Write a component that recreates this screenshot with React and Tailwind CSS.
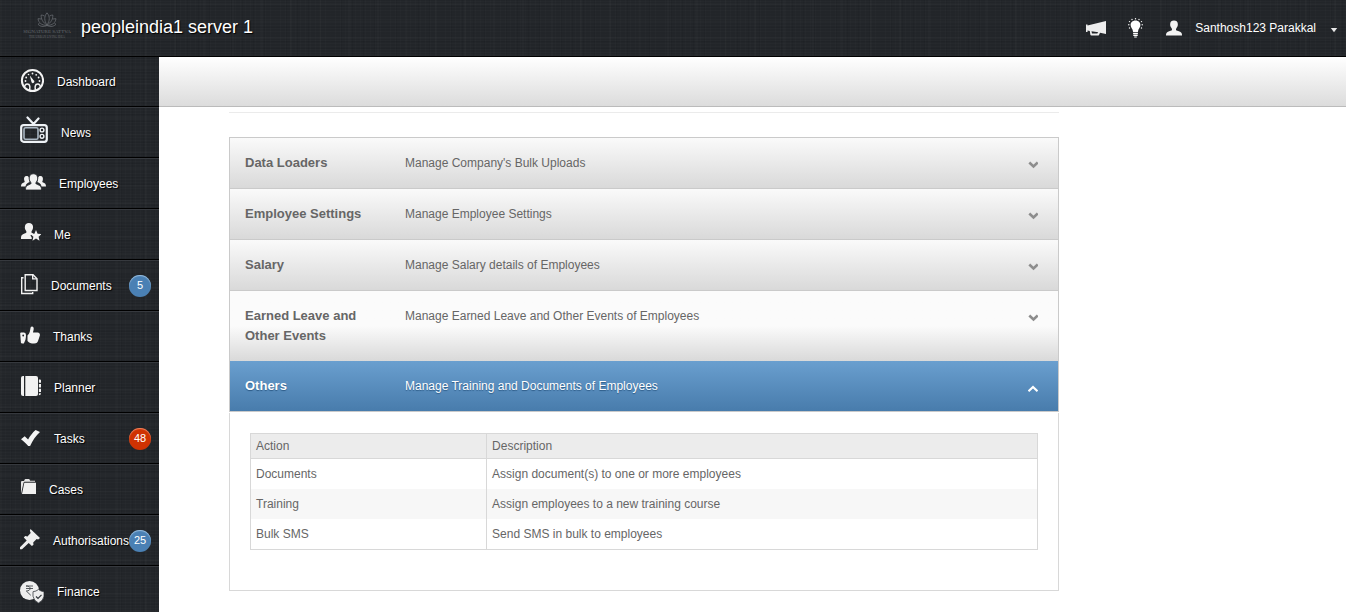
import React, { useState } from 'react';

const DashboardIcon = () => (
  <svg width="24" height="33" viewBox="0 0 24 33" fill="none">
    <circle cx="12.5" cy="15.5" r="10.600" stroke="#f4f4f4" strokeWidth="2" />
    <path d="M4.500 22c.5-3 2.500-3.500 4.500-2.500 1 1.200 1.200 3 .5 5.500M20.500 22c-.5-3-2.500-3.500-4.500-2.500-1 1.200-1.200 3-.5 5.500" stroke="#f4f4f4" strokeWidth="1.400" />
    <path d="M9.800 10.500l3.800 4.800a1.500 1.500 0 1 1-2.200 1.500z" fill="#f4f4f4" />
    <g fill="#f4f4f4">
      <circle cx="5.500" cy="16" r=".9" />
      <circle cx="6.200" cy="12.500" r=".9" />
      <circle cx="8.500" cy="9.500" r=".8" />
      <circle cx="12.500" cy="8.500" r=".9" />
      <circle cx="16.200" cy="9.800" r=".9" />
      <circle cx="18.600" cy="12.500" r=".9" />
      <circle cx="19.500" cy="16" r=".9" />
    </g>
  </svg>
);

const NewsIcon = () => (
  <svg width="28" height="33" viewBox="0 0 28 33" fill="none" stroke="#eef2f6">
    <path d="M7.500 1.500l6 6.500M18.500 2.500L13.500 8" strokeWidth="2.200" strokeLinecap="round" />
    <rect x="1.200" y="9.200" width="25.600" height="16.600" rx="2.500" strokeWidth="2.200" />
    <rect x="4" y="11.800" width="14" height="11.400" rx="1.500" stroke="#a9b6c2" strokeWidth="1.600" />
    <circle cx="22" cy="14" r="1.900" strokeWidth="1.400" />
    <circle cx="22" cy="20.300" r="1.900" strokeWidth="1.400" />
  </svg>
);

const EmployeesIcon = () => (
  <svg width="26" height="33" viewBox="0 0 26 33" fill="#f2f2f2">
    <path d="M1 19.500c0-2.600.8-3.200 3.400-4.300.5-.4.300-1-.2-2-.5-2.500.2-4.200 2.400-4.200 1.300 0 2 .6 2.200 1.500.1 2 .2 3.200.9 4.600-2.500 1.200-3.700 2-4.200 4.400z" />
    <path d="M26 19.500c0-2.600-.8-3.200-3.400-4.300-.5-.4-.3-1 .2-2 .5-2.500-.2-4.200-2.400-4.200-1.300 0-2 .6-2.200 1.500-.1 2-.2 3.200-.9 4.600 2.500 1.200 3.700 2 4.200 4.400z" />
    <path d="M5.500 23c0-3.800 1.200-4.400 5-5.900.9-.6.500-1.500-.1-2.400-1.300-1.600-1.200-3-1-4.400.2-2.200 1.500-3.500 4-3.500s3.900 1.300 4.100 3.500c.2 1.500.2 2.900-1 4.400-.6.900-1 1.800-.1 2.400 3.800 1.500 5.100 2.100 5.100 5.900z" stroke="#212429" strokeWidth=".8" />
  </svg>
);

const MeIcon = () => (
  <svg width="21" height="33" viewBox="0 0 21 33" fill="#f2f2f2">
    <path d="M1 21c0-4.300 1-4.500 4.900-6 .9-.6.600-1.500 0-2.500-1-1.500-1.200-2.700-1-4 .2-2.300 1.500-3.500 4-3.500s3.900 1.200 4.100 3.500c.1 1.400 0 2.500-1 4-.6 1-.9 1.900 0 2.500l1.500.6c-.5 1-.9 1.200-3 1.400.2 2 1.800 2 1.200 4z" />
    <path d="M16 12l1.600 3.700 4 .4-3 2.600.9 4L16 20.600l-3.500 2.100.9-4-3-2.600 4-.4z" />
  </svg>
);

const DocumentsIcon = () => (
  <svg width="18" height="33" viewBox="0 0 18 33" fill="none" stroke="#f2f2f2" strokeWidth="1.400">
    <path d="M5.200 5.700h7.800l4 4v11.800H5.200z" />
    <path d="M12.700 5.700v4.200h4.300" />
    <path d="M3.500 8.700H1.700v15.800h11v-1.500" />
  </svg>
);

const ThanksIcon = () => (
  <svg width="20" height="33" viewBox="0 0 20 33">
    <path d="M7.500 15.500c2.500-2.500 2.400-4.500 3-7.500.5-2.300 3.200-2 3.200.5 0 2-.5 2.700-.7 4h4.500c2.300 0 2.800 1.800 2.200 3.600l-1.500 4.500c-.6 2-1.500 2.900-4 2.900-3.500 0-4.900-.3-6.700-2.500z" fill="#f4f4f4" />
    <path d="M.2 13.500q0-1 1-1H4q2 .2 2 2.500c0 3-.7 6-2.200 8.500H2.200q-1.200 0-1.300-1.200z" fill="#f4f4f4" />
    <circle cx="3.200" cy="15.500" r=".9" fill="#212429" />
  </svg>
);

const PlannerIcon = () => (
  <svg width="21" height="33" viewBox="0 0 21 33" fill="#f2f2f2">
    <path d="M3 5h1v20H3q-2 0-2-2V7q0-2 2-2z" />
    <path d="M5.300 5H16q2 0 2 2v16q0 2-2 2H5.300z" />
    <path d="M18.900 8.500h1.100q1 0 1 1v2.300h-2.100zM18.900 13h2.100v3.500h-2.100zM18.900 17.800h2.100v3.200h-2.100zM18.900 22.200h2.100q0 2-2.100 2z" />
  </svg>
);

const TasksIcon = () => (
  <svg width="21" height="33" viewBox="0 0 21 33" fill="#f4f4f4">
    <path d="M1 17.200l3.700-3 3.400 3.400c2-3.700 4.400-6.800 7.500-9.500l4.400 2c-4.200 4-7.300 8.300-9.900 14H8.200C6.300 21.500 3.500 19 1 17.200z" />
  </svg>
);

const CasesIcon = () => (
  <svg width="16" height="33" viewBox="0 0 16 33" fill="#f0f0f0">
    <path d="M1 21V8.500L2 8h2l.6-1.300Q4.800 6 5.500 6h3.300q.7 0 .9.700l.4 1H15v1.100H4.800q-1 0-1.300 1z" fill="#e4e4e4" />
    <path d="M4.300 9.700H16V21H2z" />
  </svg>
);

const AuthIcon = () => (
  <svg width="20" height="33" viewBox="0 0 20 33" fill="#efefef">
    <path d="M10.500 5l9.500 9-1.800 1.500-1.600-.4-3.400 3.400.3 2.300-1.600 1.200-3.200-3L2 25.200H0v-2l6.700-6.600-2.900-3L5.200 12l2.300.4L10.700 9l-.8-2.200z" />
  </svg>
);

const FinanceIcon = () => (
  <svg width="24" height="33" viewBox="0 0 24 33">
    <circle cx="9.500" cy="15.500" r="9.500" fill="#eeeeee" />
    <path d="M6 11h7M6 13.500h7M6 11c5.500-.3 5.500 5 .3 5l4.500 4.300" fill="none" stroke="#44484d" strokeWidth=".9" />
    <path d="M18.500 14.500q2.500 2 5.500 2.200v4.500q-.5 4.300-5.500 6.800-5-2.500-5.500-6.800v-4.500q3-.2 5.500-2.200z" fill="#eeeeee" stroke="#3a3e43" strokeWidth=".8" />
    <path d="M16 21.500l2 2 3.500-3.700" fill="none" stroke="#33373c" strokeWidth="1.200" />
  </svg>
);

const Chevron = ({ up }) => (
  <svg width="10" height="20" viewBox="0 0 10 20" fill="none" className="shrink-0">
    {up ? (
      <path d="M.5 15.300L5 11l4.500 4.300" stroke="#fff" strokeWidth="2.200" />
    ) : (
      <path d="M1.300 9.500l4.200 4 4.200-4" stroke="#8d8d8d" strokeWidth="2.600" />
    )}
  </svg>
);

const Logo = () => (
  <div className="flex w-[46px] flex-col items-center pb-1.5 font-['Liberation_Serif',serif] text-[#666a6f]">
    <svg width="20" height="16" viewBox="0 0 20 16" fill="none" stroke="currentColor" strokeWidth=".8">
      <path d="M10 .8c3 3.500 3 8 0 12-3-4-3-8.500 0-12z" />
      <path d="M7.500 4Q5.500 3 4.200 3c-.2 4 1.500 7.500 5.800 10M12.500 4q2-1 3.300-1c.2 4-1.500 7.500-5.800 10" />
      <path d="M4.500 7L1 6.700c.5 4 3.500 6.600 9 6.800M15.500 7l3.500-.3c-.5 4-3.500 6.600-9 6.800" />
      <path d="M2.500 11.500l-1.500.7c2 2.300 5.500 3 9 1.300M17.500 11.500l1.500.7c-2 2.300-5.500 3-9 1.300" />
    </svg>
    <span className="text-[5px] leading-[7px] whitespace-nowrap">SIGNATURE SATTVA</span>
    <span className="text-[3px] leading-[4px] whitespace-nowrap">THE URBAN LIVING IDEA</span>
  </div>
);

const menu = [
  { name: 'Dashboard', icon: DashboardIcon },
  { name: 'News', icon: NewsIcon },
  { name: 'Employees', icon: EmployeesIcon },
  { name: 'Me', icon: MeIcon },
  { name: 'Documents', icon: DocumentsIcon, count: 5 },
  { name: 'Thanks', icon: ThanksIcon },
  { name: 'Planner', icon: PlannerIcon },
  { name: 'Tasks', icon: TasksIcon, count: 48, urgent: true },
  { name: 'Cases', icon: CasesIcon },
  { name: 'Authorisations', icon: AuthIcon, count: 25 },
  { name: 'Finance', icon: FinanceIcon },
];

const sections = [
  { title: 'Data Loaders', text: "Manage Company's Bulk Uploads" },
  { title: 'Employee Settings', text: 'Manage Employee Settings' },
  { title: 'Salary', text: 'Manage Salary details of Employees' },
  { title: 'Earned Leave and Other Events', text: 'Manage Earned Leave and Other Events of Employees', tall: true },
  {
    title: 'Others',
    text: 'Manage Training and Documents of Employees',
    actions: [
      ['Documents', 'Assign document(s) to one or more employees'],
      ['Training', 'Assign employees to a new training course'],
      ['Bulk SMS', 'Send SMS in bulk to employees'],
    ],
  },
];

// dark woven background shared by the header and the sidebar
const linen =
  'bg-[#222529] bg-[image:repeating-linear-gradient(0deg,rgba(255,255,255,0.015)_0_1px,transparent_1px_3px),repeating-linear-gradient(90deg,rgba(255,255,255,0.012)_0_1px,transparent_1px_5px),repeating-linear-gradient(0deg,rgba(0,0,0,0.06)_0_1px,transparent_1px_7px),repeating-linear-gradient(90deg,rgba(0,0,0,0.06)_0_1px,transparent_1px_11px),repeating-linear-gradient(90deg,rgba(255,255,255,0.015)_0_2px,transparent_2px_29px),repeating-linear-gradient(0deg,rgba(255,255,255,0.015)_0_2px,transparent_2px_17px)]';

const Header = () => (
  <header className={`${linen} flex h-[57px] shrink-0 items-center border-b border-black pr-2 pl-6 text-white`}>
    <Logo />
    <h1 className="ml-[11px] pb-0.5 text-lg leading-6 [text-shadow:1px_1px_1px_#000]">peopleindia1 server 1</h1>

    <div className="ml-auto flex items-center">
      <button type="button" aria-label="Announcements">
        <svg width="20" height="20" viewBox="0 0 20 20" fill="#ededed">
          <path d="M20 3v13l-6-1.200-1 2.200q-.3.500-1 .5H5.500q-1 0-1.200-1L3.800 13 1.500 12.600V14H0V6.500h1.500v1zM5.500 13.300l.5 2.200h5.300l.9-1.200z" />
        </svg>
      </button>
      <button type="button" aria-label="Tips" className="ml-[22px]">
        <svg width="15" height="20" viewBox="0 0 15 20" fill="#fff">
          <path d="M7.500 2.500c3.200 0 4.900 2.200 4.900 4.600 0 2.800-2.200 3.700-2.500 6.900H5.100C4.800 10.800 2.600 9.900 2.600 7.100c0-2.400 1.700-4.600 4.900-4.600z" />
          <path d="M5.100 14.700h4.800v1.300H5.100zM5.300 16.600h4.400v1.300H5.300zM6.200 18.400h2.600v1.100H6.200z" />
          <g>
            <circle cx="7.500" cy=".8" r=".7" />
            <circle cx="4" cy="1.500" r=".7" />
            <circle cx="11" cy="1.500" r=".7" />
            <circle cx="1.500" cy="3.600" r=".7" />
            <circle cx="13.500" cy="3.600" r=".7" />
            <circle cx=".8" cy="6.800" r=".7" />
            <circle cx="14.200" cy="6.800" r=".7" />
            <circle cx="1.500" cy="10" r=".7" />
            <circle cx="13.500" cy="10" r=".7" />
          </g>
        </svg>
      </button>
      <button type="button" className="ml-[23px] flex items-center text-xs leading-5">
        <svg width="16" height="20" viewBox="0 0 16 20" fill="#f2f2f2">
          <path d="M0 17.500c0-2.700.5-3.300 5.500-5 .9-.6.500-1.500 0-2.500C4.400 8.700 4 7.500 4.200 5.800 4.400 3.600 5.700 2.500 8 2.500s3.600 1.100 3.800 3.300c.2 1.700-.2 2.900-1.300 4.200-.5 1-.9 1.900 0 2.500 5 1.700 5.500 2.300 5.500 5z" />
        </svg>
        <span className="ml-[13px]">Santhosh123 Parakkal</span>
        <svg width="8" height="20" viewBox="0 0 8 20" fill="#e6e6e6" className="ml-3.5">
          <path d="M.8 10h6.400L4 14.200z" />
        </svg>
      </button>
    </div>
  </header>
);

const Sidebar = () => (
  <nav className={`${linen} w-[159px] shrink-0 overflow-hidden`}>
    <ul>
      {menu.map(({ name, icon: Icon, count, urgent }) => (
        <li key={name} className="h-[51px] border-t border-b border-t-[#36393e] border-b-black first:h-[50px] first:border-t-0">
          <a href="#" className="flex h-full items-center gap-[13px] pr-2 pl-5 text-xs text-white [text-shadow:1px_1px_1px_#000]">
            <span className="shrink-0"><Icon /></span>
            <span className="flex grow items-center justify-between">
              {name}
              {count && (
                <span
                  className={`flex size-[22px] shrink-0 items-center justify-center rounded-full text-[11px] [text-shadow:none] ${
                    urgent
                      ? 'bg-[#cf3202] shadow-[inset_0_1px_1px_#ee8a68]'
                      : 'bg-[#4a80b4] shadow-[inset_0_1px_1px_#9cc0e0]'
                  }`}
                >
                  {count}
                </span>
              )}
            </span>
          </a>
        </li>
      ))}
    </ul>
  </nav>
);

const ActionsTable = ({ rows }) => (
  <div className="mt-px border-x border-b border-[#d8d8d8] px-5 pt-5 pb-10">
    <table className="w-full table-fixed border-collapse border border-[#d8d8d8] text-left text-xs text-[#666]">
      <thead>
        <tr className="h-[25px] border-b border-[#d8d8d8] bg-[#ececec]">
          <th className="w-[30%] border-r border-[#d8d8d8] px-[5px] font-normal">Action</th>
          <th className="px-[5px] font-normal">Description</th>
        </tr>
      </thead>
      <tbody>
        {rows.map(([action, description]) => (
          <tr key={action} className="h-[30px] even:bg-[#f7f7f7] last:h-[31px]">
            <td className="border-r border-[#d8d8d8] px-[5px]">{action}</td>
            <td className="px-[5px]">{description}</td>
          </tr>
        ))}
      </tbody>
    </table>
  </div>
);

const Section = ({ section, open, onToggle }) => {
  let look = 'border-b border-[#cacaca] bg-linear-to-b from-[#fafafa] to-[#d9d9d9] text-[#666]';
  if (section.tall) {
    look = 'bg-linear-to-b from-[#fbfbfb] from-50% to-[#d9d9d9] text-[#666]';
  }
  if (open) {
    look = 'border-b border-[#cacaca] bg-linear-to-b from-[#6a9fcf] to-[#487cac] text-white [text-shadow:0_1px_1px_#2c5a86]';
  }

  return (
    <div>
      <button
        type="button"
        aria-expanded={open}
        onClick={onToggle}
        className={`${look} flex w-full items-start border-x border-x-[#cacaca] py-[15px] pr-5 pl-[15px] text-left text-xs leading-5`}
      >
        <span className="w-[160px] shrink-0 pr-6 text-[13px] leading-5 font-bold">{section.title}</span>
        <span className="grow">{section.text}</span>
        <Chevron up={open} />
      </button>
      {open && section.actions && <ActionsTable rows={section.actions} />}
    </div>
  );
};

const App = () => {
  const [openTitle, setOpenTitle] = useState('Others');

  return (
    <div className="flex h-screen flex-col overflow-hidden bg-white font-['Liberation_Sans',Arial,sans-serif]">
      <Header />
      <div className="flex min-h-0 grow">
        <Sidebar />
        <main className="min-w-0 grow overflow-y-auto">
          {/* Toolbar strip */}
          <div className="h-[50px] border-b border-[#bbb] bg-linear-to-b from-white to-[#dcdcdc]" />

          <div className="mx-[70px] mt-[5px] max-w-[830px]">
            <hr className="border-[#ebebeb]" />
            <div className="mt-6 border-t border-[#cacaca]">
              {sections.map((section) => (
                <Section
                  key={section.title}
                  section={section}
                  open={openTitle === section.title}
                  onToggle={() => setOpenTitle(openTitle === section.title ? '' : section.title)}
                />
              ))}
            </div>
          </div>
        </main>
      </div>
    </div>
  );
};

export default App;
